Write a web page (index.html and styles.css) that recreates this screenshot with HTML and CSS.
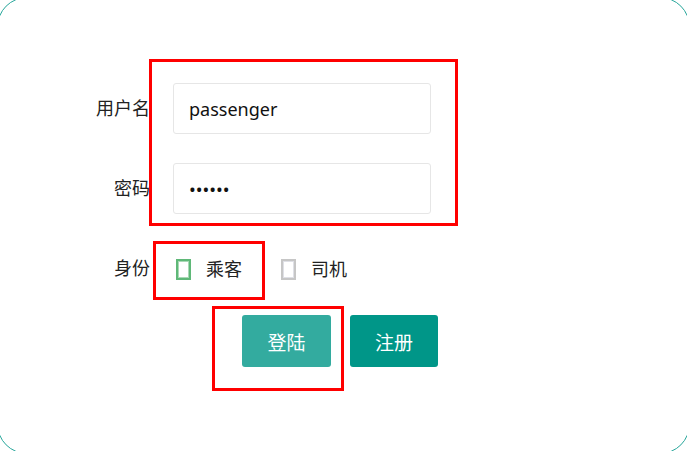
FILE: index.html
```html
<!DOCTYPE html>
<html lang="zh-CN">
<head>
<meta charset="utf-8">
<title>登录</title>
<link rel="stylesheet" href="styles.css">
</head>
<body>
<div class="panel">
  <form class="form">
    <div class="row">
      <label class="label">用户名</label>
      <input class="field" type="text" value="passenger">
    </div>
    <div class="row">
      <label class="label">密码</label>
      <input class="field" type="password" value="123456">
    </div>
    <div class="row row-radio">
      <label class="label">身份</label>
      <div class="radios">
        <span class="radio"><span class="box box-on"></span><span class="radio-text">乘客</span></span>
        <span class="radio"><span class="box"></span><span class="radio-text">司机</span></span>
      </div>
    </div>
    <div class="actions">
      <button type="button" class="btn btn-login">登陆</button>
      <button type="button" class="btn btn-reg">注册</button>
    </div>
  </form>
</div>
<div class="mark mark-fields"></div>
<div class="mark mark-role"></div>
<div class="mark mark-login"></div>
</body>
</html>
```
FILE: styles.css
```css
html, body {
  margin: 0;
  padding: 0;
  overflow: hidden;
  background: #fff;
}
body {
  width: 687px;
  height: 451px;
  font-family: "Noto Sans", "Noto Sans CJK SC", sans-serif;
  color: #222;
}
.panel {
  box-sizing: border-box;
  margin: -3px;
  width: 693px;
  height: 457px;
  border: 1px solid #26a69a;
  border-radius: 30px;
}
.form {
  margin: 0;
  padding-top: 85px;
}
.row {
  display: flex;
  align-items: center;
  height: 51px;
  margin-bottom: 29px;
}
.row-radio {
  margin-bottom: 21px;
}
.label {
  width: 152px;
  text-align: right;
  font-family: "Noto Sans CJK SC", sans-serif;
  font-size: 18px;
  line-height: 20px;
  margin-top: -3px;
  color: #222;
  margin-right: 23px;
}
.field {
  box-sizing: border-box;
  width: 258px;
  height: 51px;
  border: 1px solid #e6e6e6;
  border-radius: 3px;
  padding: 0 15px;
  font-family: "Noto Sans", sans-serif;
  font-size: 18px;
  color: #111;
  outline: none;
  background: #fff;
}
.radios {
  display: flex;
  align-items: center;
  padding-left: 3px;
}
.radio {
  display: flex;
  align-items: center;
  margin-right: 39px;
}
.box {
  box-sizing: border-box;
  width: 15px;
  height: 21px;
  border: 2px solid #c6c6c6;
  box-shadow: inset 0 0 0 1px #dfe0e6;
  margin-right: 15px;
  margin-top: 2px;
}
.box-on {
  border-color: #5fb878;
  box-shadow: inset 0 0 0 1px #a9d9b5;
}
.radio-text {
  font-family: "Noto Sans CJK SC", sans-serif;
  font-size: 18px;
  line-height: 20px;
  margin-top: -2px;
  color: #222;
}
.actions {
  display: flex;
  gap: 19px;
  padding-left: 244px;
}
.btn {
  height: 52px;
  border: none;
  border-radius: 3px;
  color: #fff;
  font-family: "Noto Sans CJK SC", sans-serif;
  font-size: 19px;
  padding: 0;
}
.btn-login {
  width: 89px;
  background: #33ab9f;
}
.btn-reg {
  width: 88px;
  background: #009688;
}
.mark {
  position: absolute;
  box-sizing: border-box;
  border: 3px solid #ff0000;
}
.mark-fields {
  left: 149px;
  top: 59px;
  width: 309px;
  height: 167px;
}
.mark-role {
  left: 153px;
  top: 241px;
  width: 112px;
  height: 59px;
}
.mark-login {
  left: 212px;
  top: 306px;
  width: 132px;
  height: 85px;
}
```
